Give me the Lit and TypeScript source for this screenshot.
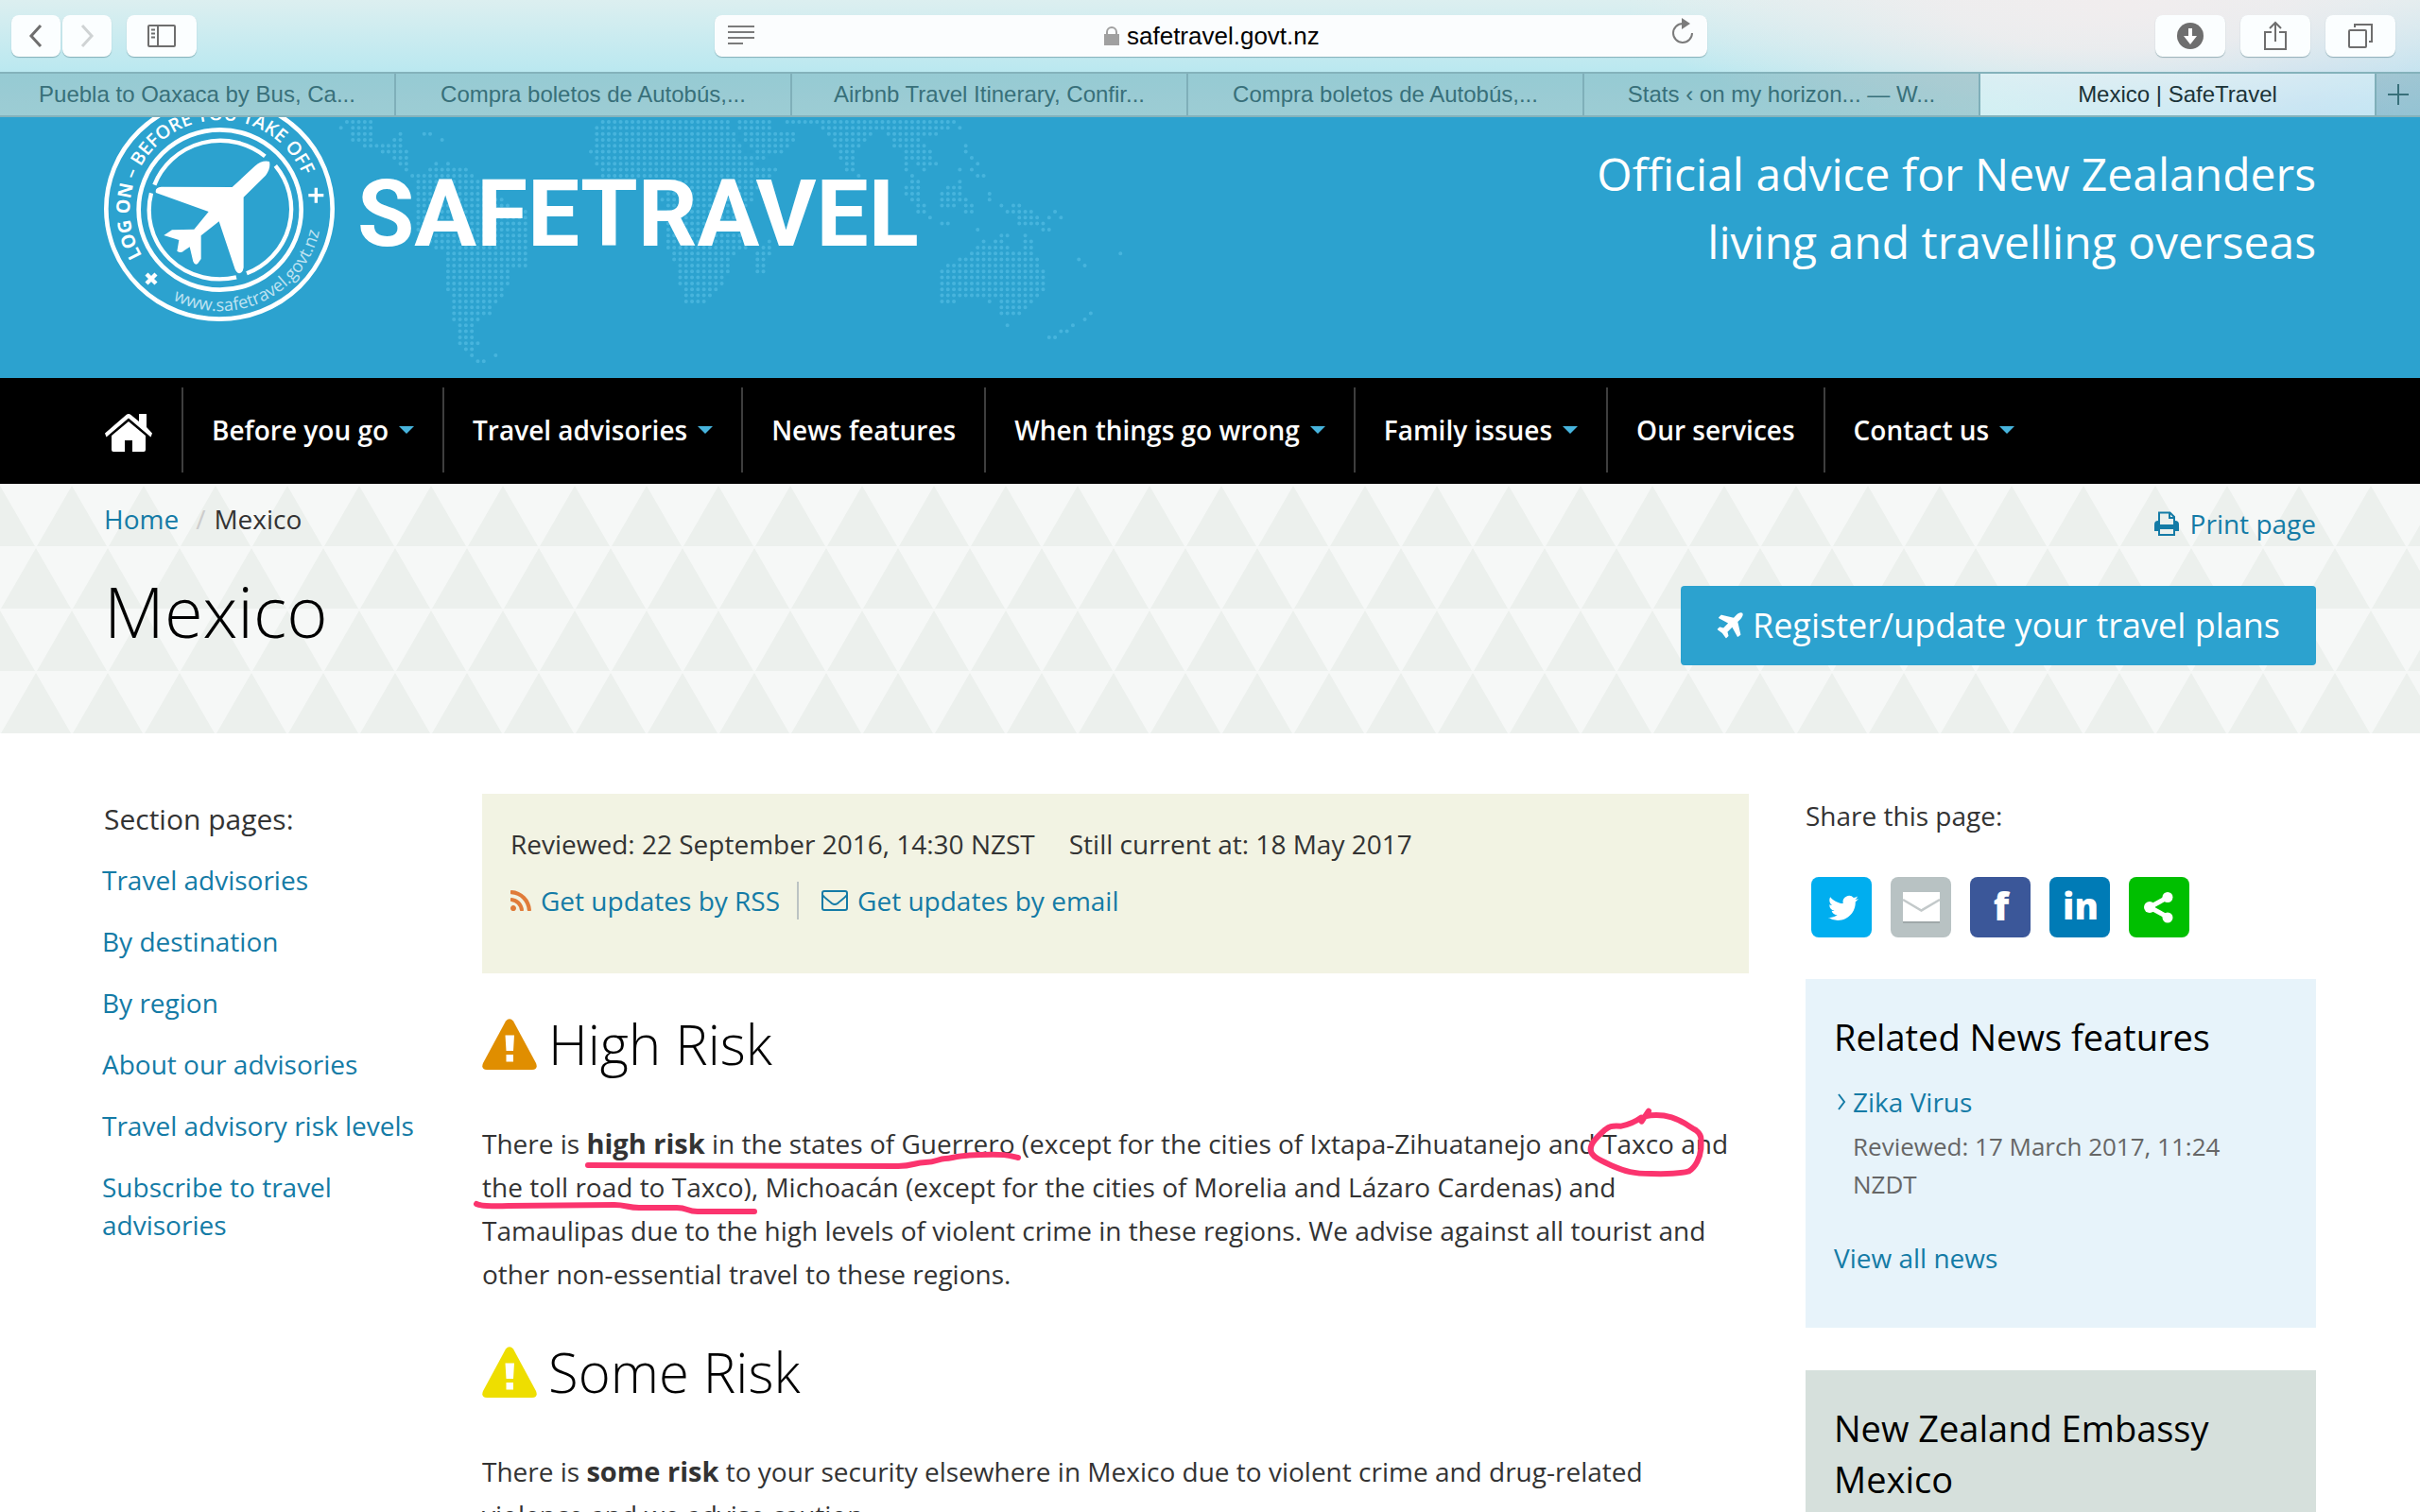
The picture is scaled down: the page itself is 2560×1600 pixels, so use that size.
import { LitElement, html, svg, css } from "lit";
import { customElement } from "lit/decorators.js";

/* Dotted world map: for each row, inclusive [from, to] column runs. */
const MAP_ROWS: number[][][] = [
  [[3, 7], [46, 67], [69, 74], [77, 105]],
  [[2, 2], [4, 7], [45, 67], [69, 74], [83, 104], [106, 106]],
  [[4, 7], [12, 12], [16, 17], [45, 68], [70, 78], [84, 91], [94, 102]],
  [[4, 7], [11, 12], [19, 19], [45, 68], [70, 78], [85, 90], [95, 99]],
  [[6, 12], [45, 69], [71, 77], [85, 89], [95, 100], [107, 107]],
  [[9, 13], [44, 69], [72, 76], [86, 88], [97, 101], [107, 107]],
  [[11, 13], [45, 73], [86, 88], [97, 101], [108, 108]],
  [[12, 13], [18, 18], [20, 20], [45, 71], [87, 88], [97, 97], [99, 102], [109, 109]],
  [[13, 13], [17, 23], [46, 75], [87, 88], [97, 97], [100, 100], [106, 106], [108, 108]],
  [[14, 24], [46, 74], [89, 89], [98, 98], [109, 110]],
  [[15, 25], [58, 72], [98, 99], [106, 106]],
  [[15, 26], [58, 72], [97, 99], [104, 106]],
  [[15, 27], [57, 71], [97, 99], [103, 106], [111, 111]],
  [[15, 29], [56, 71], [98, 99], [103, 107], [111, 111]],
  [[15, 30], [57, 70], [99, 100], [103, 105], [107, 108], [113, 113], [115, 116]],
  [[15, 33], [57, 69], [99, 100], [107, 108], [114, 118], [122, 122]],
  [[15, 33], [57, 69], [101, 101], [116, 119], [121, 121], [123, 123]],
  [[15, 33], [57, 69], [103, 104], [116, 120]],
  [[15, 33], [57, 69], [109, 109], [120, 121]],
  [[16, 33], [57, 69], [113, 114], [117, 117]],
  [[17, 33], [57, 70], [74, 74], [110, 110], [112, 113], [117, 118]],
  [[18, 33], [57, 70], [73, 74], [109, 114], [117, 118]],
  [[20, 33], [58, 68], [72, 74], [108, 118], [133, 133]],
  [[20, 33], [58, 67], [72, 73], [106, 119], [126, 126]],
  [[20, 33], [59, 67], [72, 73], [104, 119], [127, 127]],
  [[20, 30], [59, 67], [72, 73], [103, 120]],
  [[20, 30], [59, 66], [103, 120]],
  [[20, 30], [59, 66], [103, 120]],
  [[20, 29], [60, 65], [103, 120]],
  [[21, 29], [60, 64], [103, 119]],
  [[21, 28], [60, 63], [103, 105], [111, 111], [113, 118]],
  [[21, 27], [113, 117]],
  [[21, 27], [113, 116], [128, 128]],
  [[21, 25], [127, 127]],
  [[22, 24], [114, 114], [125, 125]],
  [[22, 24], [123, 124]],
  [[22, 24], [121, 122]],
  [[22, 25]],
  [[23, 24]],
  [[24, 24], [28, 28]],
  [[25, 26]],
];

const mapPath = MAP_ROWS.map((runs, row) =>
  runs
    .map(([a, b]) => {
      let d = "";
      for (let c = a; c <= b; c++) {
        d += `M${(348 + c * 6.295).toFixed(1)} ${(5 + row * 6.33).toFixed(1)}h.1`;
      }
      return d;
    })
    .join(""),
).join("");

const TABS = [
  "Puebla to Oaxaca by Bus, Ca...",
  "Compra boletos de Autobús,...",
  "Airbnb Travel Itinerary, Confir...",
  "Compra boletos de Autobús,...",
  "Stats ‹ on my horizon... — W...",
  "Mexico | SafeTravel",
];

const NAV: [string, boolean][] = [
  ["Before you go", true],
  ["Travel advisories", true],
  ["News features", false],
  ["When things go wrong", true],
  ["Family issues", true],
  ["Our services", false],
  ["Contact us", true],
];

const SECTION = [
  "Travel advisories",
  "By destination",
  "By region",
  "About our advisories",
  "Travel advisory risk levels",
  "Subscribe to travel advisories",
];

const SHARE = [
  {
    label: "Twitter",
    cls: "tw",
    art: svg`<svg x="18" y="17" width="32" height="32" viewBox="0 0 24 24"><path fill="#fff" d="M23.953 4.57a10 10 0 01-2.825.775 4.958 4.958 0 002.163-2.723c-.951.555-2.005.959-3.127 1.184a4.92 4.92 0 00-8.384 4.482C7.69 8.095 4.067 6.13 1.64 3.162a4.822 4.822 0 00-.666 2.475c0 1.71.87 3.213 2.188 4.096a4.904 4.904 0 01-2.228-.616v.06a4.923 4.923 0 003.946 4.827 4.996 4.996 0 01-2.212.085 4.936 4.936 0 004.604 3.417 9.867 9.867 0 01-6.102 2.105c-.39 0-.779-.023-1.17-.067a13.995 13.995 0 007.557 2.209c9.053 0 13.998-7.496 13.998-13.985 0-.21 0-.42-.015-.63A9.935 9.935 0 0024 4.59z"/></svg>`,
  },
  {
    label: "Email",
    cls: "em",
    art: svg`<rect x="13" y="18" width="39" height="31" fill="#9fa8a9"/><rect x="13" y="16" width="39" height="31" fill="#fff"/><path d="M13 24l19.500 11.500L52 24" fill="none" stroke="#c3c9ca" stroke-width="2.500"/>`,
  },
  {
    label: "Facebook",
    cls: "fb",
    art: svg`<text x="33" y="46" text-anchor="middle" class="glyph f">f</text>`,
  },
  {
    label: "LinkedIn",
    cls: "li",
    art: svg`<text x="33" y="45" text-anchor="middle" class="glyph in">in</text>`,
  },
  {
    label: "More",
    cls: "mo",
    art: svg`<path d="M42 21L22 32l20 11" fill="none" stroke="#fff" stroke-width="5"/><circle cx="41" cy="21.500" r="5.500" fill="#fff"/><circle cx="22" cy="32" r="6" fill="#fff"/><circle cx="41" cy="43" r="5.500" fill="#fff"/>`,
  },
];

const warning = (cls: string) => html`<svg class="warn ${cls}" viewBox="0 0 58 54" aria-hidden="true">
  <path fill="currentColor" d="M25 2.500Q29-2 33 2.500L57 47Q59.500 54 53 54H5Q-1.500 54 1 47Z"/>
  <path fill="#fff" d="M24.500 17.500h9.500l-1 16.500h-7.500ZM25.500 38h7.500v7.500h-7.500Z"/>
</svg>`;

@customElement("browser-chrome")
export class BrowserChrome extends LitElement {
  static styles = css`
    :host {
      display: block;
      font-family: "Liberation Sans", Arial, sans-serif;
      background:
        radial-gradient(ellipse 520px 150px at 2240px 0, #f1edee 0%, rgba(241, 237, 238, 0.85) 35%, rgba(241, 237, 238, 0) 100%),
        radial-gradient(ellipse 330px 130px at 2440px 110px, #b3d9f0 0%, rgba(179, 217, 240, 0) 100%),
        linear-gradient(#dceff0 0, #bae8f0 76px, #c3ecf1 124px);
    }
    button, input { font: inherit; color: inherit; border: 0; margin: 0; padding: 0; background: none; }
    .bar { display: flex; align-items: center; justify-content: space-between; height: 76px; padding: 0 26px 0 12px; box-sizing: border-box; }
    .group { display: flex; align-items: center; gap: 16px; width: 744px; }
    .right { justify-content: flex-end; width: 728px; }
    .pair { display: flex; gap: 2px; }
    .btn { display: flex; align-items: center; justify-content: center; width: 74px; height: 44px; border-radius: 8px; background: #fbfeff; box-shadow: 0 1px 1px rgba(40, 90, 100, 0.4); color: #6e6e6e; }
    .pair .btn { width: 52px; }
    .pair .dim { color: #cfd3d4; }
    .url { display: flex; align-items: center; flex: 1; height: 44px; padding: 0 14px; border-radius: 8px; background: #fbfdfe; box-shadow: 0 1px 1px rgba(40, 90, 100, 0.4); color: #7b7b7b; }
    .address { display: flex; flex: 1; align-items: center; justify-content: center; gap: 8px; }
    .address input { width: 206px; height: 40px; font-size: 26px; color: #000; outline: 0; }
    .tabs { display: flex; height: 48px; box-sizing: border-box; border-top: 2px solid #84b2bb; border-bottom: 2px solid #84b2bb; }
    .tab { flex: 1; min-width: 0; box-sizing: border-box; border-right: 2px solid #7fafb9; background: rgba(22, 94, 110, 0.22); color: #38707a; font-size: 24px; white-space: nowrap; overflow: hidden; }
    .active { background: rgba(225, 250, 252, 0.3); color: #1b3338; }
    .plus { display: flex; align-items: center; justify-content: center; width: 46px; background: rgba(22, 94, 110, 0.22); color: #38707a; }
  `;

  render() {
    return html`
      <div class="bar">
        <div class="group">
          <div class="pair">
            <button class="btn" aria-label="Back"><svg width="16" height="26" viewBox="0 0 16 26"><path d="M13 2L3 13l10 11" fill="none" stroke="currentColor" stroke-width="3"/></svg></button>
            <button class="btn dim" aria-label="Forward"><svg width="16" height="26" viewBox="0 0 16 26"><path d="M3 2l10 11L3 24" fill="none" stroke="currentColor" stroke-width="3"/></svg></button>
          </div>
          <button class="btn" aria-label="Show sidebar"><svg width="30" height="24" viewBox="0 0 30 24" fill="none" stroke="currentColor" stroke-width="2"><rect x="1" y="1" width="28" height="22" rx="1"/><path d="M11 1v22M4 5.500h4M4 9.500h4M4 13.500h4"/></svg></button>
        </div>
        <div class="url">
          <button aria-label="Reader"><svg width="28" height="20" viewBox="0 0 28 20" stroke="currentColor" stroke-width="2"><path d="M0 1h28M0 7h28M0 13h28M0 19h16"/></svg></button>
          <div class="address">
            <svg width="16" height="20" viewBox="0 0 16 20"><rect y="8" width="16" height="12" fill="#a0a0a0"/><path d="M3 9V6a5 5 0 0 1 10 0v3" fill="none" stroke="#a0a0a0" stroke-width="2"/></svg>
            <input type="text" value="safetravel.govt.nz" aria-label="Address" />
          </div>
          <button aria-label="Reload"><svg width="24" height="28" viewBox="0 0 24 28"><path d="M12 6A10 10 0 1 0 22 16" fill="none" stroke="currentColor" stroke-width="2"/><path d="M11 0l9 6-9 6z" fill="currentColor"/></svg></button>
        </div>
        <div class="group right">
          <button class="btn" aria-label="Downloads"><svg width="28" height="28" viewBox="0 0 28 28"><circle cx="14" cy="14" r="14" fill="currentColor"/><path d="M12 6h4v8h5l-7 9-7-9h5z" fill="#fff"/></svg></button>
          <button class="btn" aria-label="Share"><svg width="24" height="32" viewBox="0 0 24 32" fill="none" stroke="currentColor" stroke-width="2"><path d="M8 12H1v18h22V12h-7M12 22V3M6 8l6-6 6 6"/></svg></button>
          <button class="btn" aria-label="Show all tabs"><svg width="26" height="26" viewBox="0 0 26 26" fill="none" stroke="currentColor" stroke-width="2"><rect x="1" y="7" width="18" height="18" rx="1"/><path d="M7 4V1h18v18h-3"/></svg></button>
        </div>
      </div>
      <div class="tabs" role="tablist">
        ${TABS.map((t, i) => html`<button role="tab" class="tab ${i === 5 ? "active" : ""}">${t}</button>`)}
        <button class="plus" aria-label="New tab"><svg width="22" height="22" viewBox="0 0 22 22"><path d="M11 0v22M0 11h22" stroke="currentColor" stroke-width="2"/></svg></button>
      </div>
    `;
  }
}

@customElement("site-header")
export class SiteHeader extends LitElement {
  static styles = css`
    :host { display: block; }
    .banner { position: relative; display: flex; justify-content: space-between; height: 276px; padding: 0 110px; box-sizing: border-box; overflow: hidden; background: #2ca2cf; color: #fff; }
    .map { position: absolute; left: 0; top: 0; width: 1260px; height: 276px; }
    .brand { position: relative; display: flex; align-items: flex-start; gap: 24px; color: inherit; text-decoration: none; }
    .stamp { width: 244px; height: 216px; flex: none; }
    .ring { font-family: "Open Sans", sans-serif; font-size: 59px; fill: #fff; }
    .log { font-weight: 700; }
    .before { font-weight: 600; }
    .site { font-size: 55px; font-weight: 400; fill: #bfe3f2; }
    .name { margin-top: 53px; font-family: Roboto, "Open Sans", sans-serif; font-weight: 700; font-size: 98px; line-height: 100px; }
    .tagline { position: relative; margin: 0; padding-top: 24px; font-size: 48px; line-height: 72px; text-align: right; }
    nav { display: flex; align-items: flex-start; height: 112px; box-sizing: border-box; padding: 10px 108px 0; background: #000; }
    a { color: #fff; text-decoration: none; }
    .home { display: flex; align-items: center; height: 92px; padding: 4px 31px 0 3px; box-sizing: border-box; }
    .item { display: flex; align-items: center; gap: 11px; height: 90px; padding: 0 30px; border-left: 2px solid #3e3e3e; font-size: 28px; font-weight: 600; white-space: nowrap; }
    .caret { width: 0; border: 8px solid transparent; border-top-color: #47b4dd; border-bottom: 0; }
  `;

  render() {
    return html`
      <header class="banner">
        <svg class="map" viewBox="0 0 1260 276" aria-hidden="true">
          <path d=${mapPath} stroke="#4ab7df" stroke-width="4" stroke-linecap="round" opacity=".9"/>
        </svg>
        <a class="brand" href="#" aria-label="SafeTravel home">
          <svg class="stamp" viewBox="30 12 732 648">
            <defs>
              <path id="top" d="M151 451A286 286 0 1 1 684 305"/>
              <path id="bottom" d="M249 591A323 323 0 0 0 721 305"/>
            </defs>
            <g fill="none" stroke="#fff" stroke-width="14">
              <ellipse cx="396" cy="303" rx="359" ry="350"/>
              <ellipse cx="398" cy="306" rx="258" ry="254"/>
              <g stroke-width="13">
                <path d="M190 227A224 219 0 0 1 541 136"/>
                <path d="M574 166A224 219 0 0 1 483 508"/>
                <path d="M450 520A224 219 0 0 1 180 253"/>
              </g>
              <path stroke-width="10" d="M703 236v48M679 260h48"/>
              <path stroke-width="13" d="M165 510l30 30M195 510l-30 30"/>
            </g>
            <text class="ring"><textPath href="#top"><tspan class="log">LOG ON</tspan><tspan class="before"> – BEFORE YOU TAKE OFF</tspan></textPath></text>
            <text class="ring site"><textPath href="#bottom">www.safetravel.govt.nz</textPath></text>
            <path fill="#fff" d="M555 153Q532 147 508 168L437 234L212 233Q190 236 195 252L362 312L316 368L246 370L220 387L268 402L262 437Q275 446 285 435L302 424L313 470Q319 484 328 476L338 462V388L395 343L446 495Q458 518 470 500L473 490V266L543 197Q560 175 555 153Z"/>
          </svg>
          <span class="name">SAFETRAVEL</span>
        </a>
        <p class="tagline">Official advice for New Zealanders<br />living and travelling overseas</p>
      </header>
      <nav aria-label="Main">
        <a class="home" href="#" aria-label="Home"><svg width="50" height="40" viewBox="0 0 50 40"><path fill="#fff" d="M36 0h8v14l6 6.500-1.500 4L25 4.500 1.500 24.500 0 20.500 22.500 1Q25-1 27.500 1L36 8Z"/><path fill="#fff" d="M25 8l18 15v15q0 2-2 2H29V28h-8v12H9q-2 0-2-2V23Z"/></svg></a>
        ${NAV.map(([t, menu]) => html`<a class="item" href="#">${t}${menu ? html`<span class="caret"></span>` : ""}</a>`)}
      </nav>
    `;
  }
}

@customElement("app-root")
export class AppRoot extends LitElement {
  static styles = css`
    :host { display: flex; flex-direction: column; height: 100vh; overflow: hidden; background: #fff; font-family: "Open Sans", "Noto Sans", sans-serif; font-size: 28px; line-height: 40px; color: #333; }
    .page { flex: 1; min-height: 0; overflow: hidden; }
    a { color: #147ba6; text-decoration: none; }
    h1, h2, h3, p, ul { margin: 0; padding: 0; font-weight: 400; }
    ul { list-style: none; }
    .title {
      display: flex; justify-content: space-between; height: 264px; box-sizing: border-box; padding: 17px 110px 0;
      background: #f6f8f7 url("data:image/svg+xml,%3Csvg xmlns='http://www.w3.org/2000/svg' width='76' height='132'%3E%3Cpath fill='%23ecf0ed' d='M0 2L37 66H-37ZM76 2L113 66H39ZM38 68L75 132H1Z'/%3E%3C/svg%3E");
    }
    .crumbs { display: flex; gap: 18px; }
    .current::before { content: "/"; color: #ccc; margin-right: 9px; }
    h1 { margin-top: 36px; font-size: 74px; line-height: 84px; font-weight: 300; color: #000; }
    .actions { display: flex; flex-direction: column; align-items: flex-end; gap: 46px; padding-top: 5px; }
    .print { display: flex; align-items: center; gap: 12px; }
    .register { display: flex; align-items: center; gap: 10px; height: 84px; padding: 0 38px; border-radius: 4px; background: #2ca2cf; color: #fff; font-size: 36px; }
    .cols { display: grid; grid-template-columns: 340fr 1340fr 540fr; gap: 60px; padding: 64px 110px 0; }
    .side { padding-top: 7px; }
    .side h3 { font-size: 30px; line-height: 40px; }
    .side ul { display: flex; flex-direction: column; gap: 25px; margin: 24px 0 0 -2px; }
    .meta { padding: 30px 30px 54px; background: #f2f3e3; line-height: 46px; }
    .dates { display: flex; gap: 36px; }
    .subs { display: flex; align-items: center; margin-top: 14px; }
    .subs a { display: flex; align-items: center; gap: 10px; }
    .subs a + a { margin-left: 18px; padding-left: 24px; border-left: 2px solid #bcc3c3; line-height: 40px; }
    h2 { display: flex; align-items: center; gap: 12px; margin: 40px 0 47px; font-size: 58px; line-height: 70px; font-weight: 300; color: #000; }
    .warn { width: 58px; height: 54px; }
    .high { color: #e08e00; }
    .some { color: #eede00; }
    .advice { position: relative; padding-bottom: 6px; line-height: 46px; }
    .marks { position: absolute; left: 0; top: 0; width: 100%; height: 100%; overflow: visible; pointer-events: none; }
    strong { font-size: 29px; font-weight: 700; }
    .aside { padding-top: 3px; }
    .share { display: flex; gap: 20px; margin: 45px 0 44px 6px; }
    .share a { width: 64px; height: 64px; border-radius: 8px; }
    .share svg { display: block; }
    .tw { background: #00aeef; }
    .em { background: #b8c2c3; }
    .fb { background: #3b5799; }
    .li { background: #007bb6; }
    .mo { background: #00bf00; }
    .glyph { font-family: "Open Sans", sans-serif; font-weight: 800; fill: #fff; }
    .f { font-size: 40px; }
    .in { font-size: 38px; }
    .card { padding: 34px 30px 54px; }
    .card h3 { font-size: 38px; line-height: 54px; color: #000; }
    .news { background: #e7f3fa; }
    .embassy { margin-top: 45px; background: #d6e0dc; }
    .entry { display: flex; align-items: center; gap: 7px; margin-top: 22px; padding-left: 4px; }
    .when { margin: 7px 0 38px 20px; font-size: 26px; color: #666; }
  `;

  render() {
    return html`
      <browser-chrome></browser-chrome>
      <div class="page">
        <site-header></site-header>
        <section class="title">
          <div>
            <div class="crumbs"><a href="#">Home</a><span class="current">Mexico</span></div>
            <h1>Mexico</h1>
          </div>
          <div class="actions">
            <a class="print" href="#"><svg width="26" height="26" viewBox="0 0 26 26" fill="none" stroke="currentColor" stroke-width="2"><path d="M5 14V1.500h11.500L21 6v8M16 2v5h5"/><path fill="currentColor" stroke="none" d="M0 14q0-4 4-4v4h18v-4q4 0 4 4v7h-5v-3H5v3H0Z"/><path d="M5 18h16v7H5z"/></svg>Print page</a>
            <a class="register" href="#"><svg width="28" height="28" viewBox="150 130 1460 1440"><path fill="currentColor" d="M1568 160q44 52 12 148t-108 172l-161 161 160 696q5 19-12 33l-128 96q-7 6-19 6-4 0-7-1-15-3-21-16l-279-508-259 259 53 194q5 17-8 31l-96 96q-9 9-23 9h-2q-15-2-24-13l-189-252-252-189q-11-7-13-23-1-13 9-25l96-97q9-9 23-9 6 0 8 1l194 53 259-259-508-279q-14-8-17-24-2-16 9-27l128-128q14-13 30-8l665 159 160-160q76-76 172-108t148 12z"/></svg>Register/update your travel plans</a>
          </div>
        </section>
        <div class="cols">
          <nav class="side" aria-label="Section">
            <h3>Section pages:</h3>
            <ul>${SECTION.map((s) => html`<li><a href="#">${s}</a></li>`)}</ul>
          </nav>
          <main>
            <div class="meta">
              <div class="dates"><span>Reviewed: 22 September 2016, 14:30 NZST</span><span>Still current at: 18 May 2017</span></div>
              <div class="subs">
                <a href="#"><svg width="22" height="22" viewBox="192 126 1410 1410"><path fill="#e07b39" d="M576 1344q0 80-56 136t-136 56-136-56-56-136 56-136 136-56 136 56 56 136zm512 123q2 28-17 48-18 21-47 21h-135q-25 0-43-16.500t-20-41.500q-22-229-184.500-391.500t-391.500-184.500q-25-2-41.500-20t-16.500-43v-135q0-29 21-47 17-17 43-17h5q160 13 306 80.500t259 181.500q114 113 181.500 259t80.500 306zm512 2q2 27-18 47-18 20-46 20h-143q-26 0-44.500-17.500t-19.500-42.500q-12-215-101-408.500t-231.500-336-336-231.500-408.500-102q-25-1-42.500-19.500t-17.500-43.500v-143q0-28 20-46 18-18 44-18h3q262 13 501.500 120t425.500 294q187 186 294 425.500t120 501.500z"/></svg>Get updates by RSS</a>
                <a href="#"><svg width="28" height="22" viewBox="0 0 28 22" fill="none" stroke="currentColor" stroke-width="2"><rect x="1" y="1" width="26" height="20" rx="2"/><path d="M1 5c3 4 7 6 10 9q3 2 6 0c3-3 7-5 10-9"/></svg>Get updates by email</a>
              </div>
            </div>
            <h2>${warning("high")}High Risk</h2>
            <p class="advice">
              There is <strong>high risk</strong> in the states of Guerrero (except for the cities of Ixtapa-Zihuatanejo and Taxco and<br />
              the toll road to Taxco), Michoacán (except for the cities of Morelia and Lázaro Cardenas) and<br />
              Tamaulipas due to the high levels of violent crime in these regions. We advise against all tourist and<br />
              other non-essential travel to these regions.
              <svg class="marks" aria-hidden="true" fill="none" stroke="#fb346e" stroke-width="6" stroke-linecap="round" stroke-linejoin="round">
                <path d="M112 46L440 47C457 47 457 43 469 43S482 39 490 39S498 36 527 35S558 36 567 38"/>
                <path d="M-6 87Q0 90 28 89L140 88C152 88 154 91 166 91L206 91C218 91 216 95 228 95L288 95"/>
                <g transform="translate(1150 -27) scale(.3333)" stroke-width="18">
                  <path d="M252 47L230 80M228 68C205 85 190 90 165 95C130 92 125 98 112 108C90 128 66 150 68 172C72 192 95 202 130 218C180 240 205 246 260 246C330 248 360 244 380 238C402 225 415 195 418 168C420 130 420 122 402 108C380 96 360 78 325 67C300 60 270 58 240 64"/>
                </g>
              </svg>
            </p>
            <h2>${warning("some")}Some Risk</h2>
            <p class="advice">
              There is <strong>some risk</strong> to your security elsewhere in Mexico due to violent crime and drug-related<br />
              violence and we advise caution.
            </p>
          </main>
          <aside class="aside">
            <p>Share this page:</p>
            <div class="share">
              ${SHARE.map((s) => html`<a href="#" class=${s.cls} aria-label=${s.label}><svg width="64" height="64" viewBox="0 0 64 64">${s.art}</svg></a>`)}
            </div>
            <section class="card news">
              <h3>Related News features</h3>
              <a class="entry" href="#"><svg width="9" height="18" viewBox="0 0 9 18"><path d="M1 1l6 8-6 8" fill="none" stroke="currentColor" stroke-width="2"/></svg>Zika Virus</a>
              <p class="when">Reviewed: 17 March 2017, 11:24 NZDT</p>
              <a href="#">View all news</a>
            </section>
            <section class="card embassy"><h3>New Zealand Embassy Mexico</h3></section>
          </aside>
        </div>
      </div>
    `;
  }
}
